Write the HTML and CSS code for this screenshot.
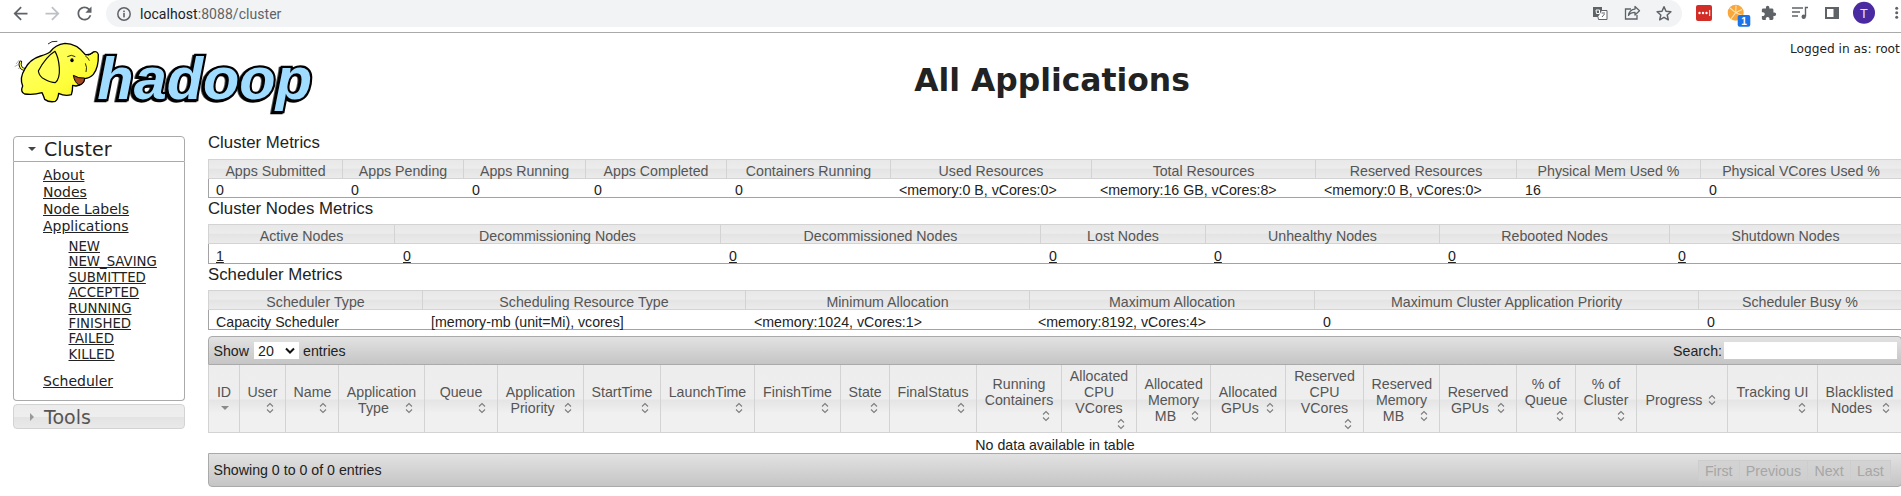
FILE: index.html
```html
<!DOCTYPE html>
<html lang="en">
<head>
<meta charset="utf-8">
<title>All Applications</title>
<link rel="stylesheet" href="styles.css">
</head>
<body>
<svg class="defs" width="0" height="0" aria-hidden="true">
  <symbol id="sort" viewBox="0 0 16 16"><path d="M5 6.5 8 3.5 11 6.5M5 9.5 8 12.5 11 9.5" fill="none" stroke="#7d7d7d" stroke-width="1.1"/></symbol>
  <symbol id="sort-desc" viewBox="0 0 16 16"><path d="M4 6h8L8 10z" fill="#8a8a8a"/></symbol>
</svg>

<div class="browser-bar">
  <svg class="tb-icon" viewBox="0 0 24 24"><path d="M20 11H7.83l5.59-5.59L12 4l-8 8 8 8 1.41-1.41L7.83 13H20v-2z"/></svg>
  <svg class="tb-icon tb-icon-off" viewBox="0 0 24 24"><path d="M4 11h12.17l-5.59-5.59L12 4l8 8-8 8-1.41-1.41L16.17 13H4v-2z"/></svg>
  <svg class="tb-icon" viewBox="0 0 24 24"><path d="M17.65 6.35A7.958 7.958 0 0012 4c-4.42 0-7.99 3.58-7.99 8s3.57 8 7.99 8c3.73 0 6.84-2.55 7.73-6h-2.08A5.99 5.99 0 0112 18c-3.31 0-6-2.69-6-6s2.69-6 6-6c1.66 0 3.14.69 4.22 1.78L13 11h7V4l-2.35 2.35z"/></svg>
  <div class="omnibox">
    <svg class="info-icon" viewBox="0 0 16 16"><circle cx="8" cy="8" r="6.2" fill="none" stroke="#5f6368" stroke-width="1.5"/><rect x="7.2" y="7" width="1.6" height="4.4" fill="#5f6368"/><rect x="7.2" y="4.6" width="1.6" height="1.6" fill="#5f6368"/></svg>
    <span class="url"><span class="url-host">localhost</span>:8088/cluster</span>
    <svg class="omni-actions" viewBox="1590 0 88 27">
      <rect x="1593" y="7" width="9" height="10" fill="#5f6368"/>
      <path d="M1602 10.500h5v9h-8.500l-.5-2.500" fill="#fff" stroke="#5f6368"/>
      <path d="M1596 10h3.500v3.500h-3z" fill="none" stroke="#fff"/>
      <path d="M1601.500 13h3.500M1602 17l2.500-3" fill="none" stroke="#5f6368"/>
      <path d="M1631 9h-5.500v10h11.500v-4" fill="none" stroke="#5f6368" stroke-width="1.300"/>
      <path d="M1635 6.500l4.500 4.300-4.500 4.200v-2.600c-3 0-5 .8-6.500 3 .5-3.500 2.500-6 6.500-6.300z" fill="none" stroke="#5f6368" stroke-width="1.300" stroke-linejoin="round"/>
      <path d="M1664 6.800l2 4.500 4.900.5-3.700 3.200 1.100 4.800-4.300-2.500-4.300 2.500 1.100-4.800-3.700-3.200 4.900-.5z" fill="none" stroke="#5f6368" stroke-width="1.500" stroke-linejoin="round"/>
    </svg>
  </div>
  <svg class="ext-strip" viewBox="1682 0 219 32">
    <rect x="1696" y="5" width="16" height="16" rx="2" fill="#d32d27"/>
    <circle cx="1699.500" cy="13" r="1.200" fill="#fff"/><circle cx="1703" cy="13" r="1.200" fill="#fff"/><circle cx="1706.500" cy="13" r="1.200" fill="#fff"/><rect x="1709.200" y="10" width="1" height="6" fill="#fff"/>
    <circle cx="1735.700" cy="12.700" r="8" fill="#f9a63a"/>
    <path d="M1735.700 12.700 1730 8M1735.700 12.700 1736 5.500M1735.700 12.700 1742 9.500M1735.700 12.700 1742.500 15.500M1735.700 12.700 1731 19" stroke="#fde3b0" stroke-width="1.100"/>
    <rect x="1737.700" y="15" width="12.600" height="11.700" rx="2" fill="#1a73e8"/>
    <text class="badge-text" x="1744" y="24.800">1</text>
    <g transform="translate(1760.500 5) scale(.68)"><path fill="#5f6368" d="M20.500 11H19V7c0-1.100-.9-2-2-2h-4V3.500C13 2.120 11.880 1 10.500 1S8 2.120 8 3.500V5H4c-1.100 0-1.990.9-1.990 2v3.800H3.500c1.490 0 2.700 1.210 2.700 2.700s-1.210 2.700-2.700 2.700H2V20c0 1.100.9 2 2 2h3.800v-1.500c0-1.490 1.210-2.700 2.700-2.700 1.490 0 2.700 1.210 2.700 2.700V22H17c1.100 0 2-.9 2-2v-4h1.500c1.380 0 2.500-1.120 2.500-2.500S21.880 11 20.500 11z"/></g>
    <path d="M1792 8h11M1792 12h8M1792 16h6" stroke="#5f6368" stroke-width="1.400"/>
    <path d="M1805.500 16.500V7.500h2.500" fill="none" stroke="#5f6368" stroke-width="1.400"/><circle cx="1803.700" cy="16.700" r="2.200" fill="#5f6368"/>
    <rect x="1825" y="7" width="14" height="12" fill="#5f6368"/><rect x="1827" y="9" width="6.500" height="8" fill="#fff"/>
    <circle cx="1864" cy="12.700" r="11" fill="#4a2aa0"/>
    <text class="avatar-text" x="1864" y="17.500">T</text>
    <circle cx="1896.700" cy="8.300" r="1.500" fill="#5f6368"/><circle cx="1896.700" cy="12.700" r="1.500" fill="#5f6368"/><circle cx="1896.700" cy="17.300" r="1.500" fill="#5f6368"/>
  </svg>
</div>

<header class="page-head">
  <svg class="logo" viewBox="0 0 915 240" role="img" aria-label="Hadoop">
    <defs>
      <linearGradient id="ele" x1="0" y1="0" x2="1" y2="1"><stop offset="0" stop-color="#ffff78"/><stop offset=".6" stop-color="#ffff3c"/><stop offset="1" stop-color="#f4ea20"/></linearGradient>
    </defs>
    <text class="logo-word" x="262" y="189" textLength="644" lengthAdjust="spacingAndGlyphs">hadoop</text>
    <path d="M44 100Q36 100 32 92Q28 84 32 78" fill="none" stroke="#000" stroke-width="9" stroke-linecap="round"/>
    <path d="M44 100Q36 100 32 92Q28 84 32 78" fill="none" stroke="#ffff50" stroke-width="4" stroke-linecap="round"/>
    <path d="M44 100Q58 70 92 60Q112 54 120 48Q135 26 165 22Q200 22 226 56Q240 58 250 48Q262 44 265 56Q266 95 250 115Q240 126 224 128Q222 146 198 150L188 148Q188 165 184 176Q165 182 146 172Q144 190 136 196Q118 200 104 190Q100 178 96 170Q70 178 44 174Q30 168 38 150Q28 125 44 100Z" fill="url(#ele)" stroke="#000" stroke-width="4" stroke-linejoin="round"/>
    <path d="M135 46Q108 62 85 105Q88 122 104 130Q122 140 136 140Q150 128 148 96Q146 64 135 46Z" fill="#ffff55" stroke="#000" stroke-width="3.500" stroke-linejoin="round"/>
    <path d="M190 118Q194 140 206 146Q222 146 224 126Q206 128 190 118Z" fill="#a8481e" stroke="#000" stroke-width="3"/>
    <ellipse cx="186" cy="73" rx="5" ry="6" fill="#000"/>
    <path d="M172 62Q184 54 196 62M226 60Q236 66 238 74M234 58L250 50M226 82Q232 94 228 108M142 16Q124 14 114 24" fill="none" stroke="#000" stroke-width="2.500"/>
    <path d="M18 84L28 72M14 92L24 86M24 98L32 94" fill="none" stroke="#888" stroke-width="2"/>
  </svg>
  <h1 class="page-title">All Applications</h1>
  <div class="user-info">Logged in as: root</div>
</header>

<div class="layout">
  <nav class="sidenav">
    <h3 class="nav-head nav-head-open"><svg class="nav-arrow" viewBox="0 0 8 8"><path d="M0 2h8L4 6z"/></svg>Cluster</h3>
    <div class="nav-body">
      <ul class="nav-list">
        <li><a href="#">About</a></li>
        <li><a href="#">Nodes</a></li>
        <li><a href="#">Node Labels</a></li>
        <li><a href="#">Applications</a>
          <ul class="nav-sub">
            <li><a href="#">NEW</a></li>
            <li><a href="#">NEW_SAVING</a></li>
            <li><a href="#">SUBMITTED</a></li>
            <li><a href="#">ACCEPTED</a></li>
            <li><a href="#">RUNNING</a></li>
            <li><a href="#">FINISHED</a></li>
            <li><a href="#">FAILED</a></li>
            <li><a href="#">KILLED</a></li>
          </ul>
        </li>
        <li class="nav-gap"><a href="#">Scheduler</a></li>
      </ul>
    </div>
    <h3 class="nav-head nav-head-closed"><svg class="nav-arrow" viewBox="0 0 8 8"><path d="M2 0v8l4-4z"/></svg>Tools</h3>
  </nav>

  <main class="content">
    <h3 class="section-title">Cluster Metrics</h3>
    <table class="metrics metrics-cluster">
      <thead><tr><th>Apps Submitted</th><th>Apps Pending</th><th>Apps Running</th><th>Apps Completed</th><th>Containers Running</th><th>Used Resources</th><th>Total Resources</th><th>Reserved Resources</th><th>Physical Mem Used %</th><th>Physical VCores Used %</th></tr></thead>
      <tbody><tr><td>0</td><td>0</td><td>0</td><td>0</td><td>0</td><td>&lt;memory:0 B, vCores:0&gt;</td><td>&lt;memory:16 GB, vCores:8&gt;</td><td>&lt;memory:0 B, vCores:0&gt;</td><td>16</td><td>0</td></tr></tbody>
    </table>

    <h3 class="section-title">Cluster Nodes Metrics</h3>
    <table class="metrics metrics-nodes">
      <thead><tr><th>Active Nodes</th><th>Decommissioning Nodes</th><th>Decommissioned Nodes</th><th>Lost Nodes</th><th>Unhealthy Nodes</th><th>Rebooted Nodes</th><th>Shutdown Nodes</th></tr></thead>
      <tbody><tr><td><a href="#">1</a></td><td><a href="#">0</a></td><td><a href="#">0</a></td><td><a href="#">0</a></td><td><a href="#">0</a></td><td><a href="#">0</a></td><td><a href="#">0</a></td></tr></tbody>
    </table>

    <h3 class="section-title">Scheduler Metrics</h3>
    <table class="metrics metrics-sched">
      <thead><tr><th>Scheduler Type</th><th>Scheduling Resource Type</th><th>Minimum Allocation</th><th>Maximum Allocation</th><th>Maximum Cluster Application Priority</th><th>Scheduler Busy %</th></tr></thead>
      <tbody><tr><td>Capacity Scheduler</td><td>[memory-mb (unit=Mi), vcores]</td><td>&lt;memory:1024, vCores:1&gt;</td><td>&lt;memory:8192, vCores:4&gt;</td><td>0</td><td>0</td></tr></tbody>
    </table>

    <div class="dt-toolbar dt-toolbar-top">
      <label class="dt-length">Show <select class="dt-select"><option>20</option></select> entries</label>
      <label class="dt-search">Search:<input class="dt-input" type="text"></label>
    </div>
    <table class="apps">
      <thead><tr>
        <th class="apps-id"><div>ID<svg class="sort"><use href="#sort-desc"/></svg></div></th>
        <th><div>User<svg class="sort"><use href="#sort"/></svg></div></th>
        <th><div>Name<svg class="sort"><use href="#sort"/></svg></div></th>
        <th><div>Application Type<svg class="sort"><use href="#sort"/></svg></div></th>
        <th><div>Queue<svg class="sort"><use href="#sort"/></svg></div></th>
        <th><div>Application Priority<svg class="sort"><use href="#sort"/></svg></div></th>
        <th><div>StartTime<svg class="sort"><use href="#sort"/></svg></div></th>
        <th><div>LaunchTime<svg class="sort"><use href="#sort"/></svg></div></th>
        <th><div>FinishTime<svg class="sort"><use href="#sort"/></svg></div></th>
        <th><div>State<svg class="sort"><use href="#sort"/></svg></div></th>
        <th><div>FinalStatus<svg class="sort"><use href="#sort"/></svg></div></th>
        <th><div>Running Containers<svg class="sort"><use href="#sort"/></svg></div></th>
        <th><div>Allocated CPU VCores<svg class="sort"><use href="#sort"/></svg></div></th>
        <th><div>Allocated Memory MB<svg class="sort"><use href="#sort"/></svg></div></th>
        <th><div>Allocated GPUs<svg class="sort"><use href="#sort"/></svg></div></th>
        <th><div>Reserved CPU VCores<svg class="sort"><use href="#sort"/></svg></div></th>
        <th><div>Reserved Memory MB<svg class="sort"><use href="#sort"/></svg></div></th>
        <th><div>Reserved GPUs<svg class="sort"><use href="#sort"/></svg></div></th>
        <th><div>% of Queue<svg class="sort"><use href="#sort"/></svg></div></th>
        <th><div>% of Cluster<svg class="sort"><use href="#sort"/></svg></div></th>
        <th><div>Progress<svg class="sort"><use href="#sort"/></svg></div></th>
        <th><div>Tracking UI<svg class="sort"><use href="#sort"/></svg></div></th>
        <th><div>Blacklisted Nodes<svg class="sort"><use href="#sort"/></svg></div></th>
      </tr></thead>
      <tbody><tr><td class="apps-empty" colspan="23">No data available in table</td></tr></tbody>
    </table>
    <div class="dt-toolbar dt-toolbar-bottom">
      <span class="dt-info">Showing 0 to 0 of 0 entries</span>
      <div class="dt-pager"><span class="dt-page">First</span><span class="dt-page">Previous</span><span class="dt-page">Next</span><span class="dt-page">Last</span></div>
    </div>
  </main>
</div>
</body>
</html>
```
FILE: styles.css
```css
html, body {
  margin: 0;
  width: 1901px;
  height: 496px;
  overflow: hidden;
  background: #fff;
}
body {
  font-family: "Liberation Sans", Arial, sans-serif;
  font-size: 14.2px;
  color: #222;
  position: relative;
}
a { color: #222; }
.defs { position: absolute; }

/* browser chrome */
.browser-bar {
  display: flex;
  align-items: flex-start;
  height: 32px;
  padding-left: 9.5px;
  border-bottom: 1px solid #aaa;
  background: #fff;
}
.tb-icon {
  width: 21px;
  height: 21px;
  margin: 3px 11px 0 0;
  fill: #5f6368;
  flex: none;
}
.tb-icon-off { fill: #bdc1c6; }
.omnibox {
  display: flex;
  align-items: center;
  width: 1576px;
  height: 27px;
  margin-left: .5px;
  background: #f1f3f4;
  border-radius: 14px;
  flex: none;
}
.info-icon { width: 16px; height: 16px; margin-left: 10px; flex: none; }
.url { margin-left: 8px; font-family: Roboto, "Noto Sans", sans-serif; font-size: 14px; letter-spacing: .05px; color: #5f6368; }
.url-host { color: #202124; }
.omni-actions { width: 88px; height: 27px; margin-left: auto; margin-right: 4px; flex: none; }
.ext-strip { width: 219px; height: 32px; flex: none; }
.badge-text { font: bold 10px "Liberation Sans", sans-serif; fill: #fff; text-anchor: middle; }
.avatar-text { font: 13px Roboto, sans-serif; fill: #e8e4f6; text-anchor: middle; }

/* page header */
.page-head {
  position: relative;
  display: flex;
  height: 100px;
}
.logo { width: 305px; height: 80px; margin: 3px 0 0 10px; flex: none; }
.logo-word {
  font: italic bold 178px "Liberation Sans", sans-serif;
  fill: #9fdcff;
  stroke: #000;
  stroke-width: 13px;
  stroke-linejoin: miter;
  paint-order: stroke;
  filter: drop-shadow(-5px 3px 0 #000);
}
.page-title {
  flex: 1;
  margin: 0;
  padding: 29px 112px 0 0;
  font: bold 31.4px/36px "DejaVu Sans", sans-serif;
  text-align: center;
  color: #222;
}
.user-info {
  position: absolute;
  top: 8px;
  left: 1790px;
  font: 12.2px/16px "DejaVu Sans", sans-serif;
  white-space: nowrap;
  color: #222;
}

/* layout */
.layout { display: flex; align-items: flex-start; }
.sidenav {
  width: 172px;
  margin: 3px 0 0 13px;
  font-family: "DejaVu Sans", sans-serif;
  flex: none;
}
.nav-head {
  display: flex;
  align-items: center;
  margin: 0;
  padding-left: 14px;
  font-size: 19px;
  font-weight: normal;
  box-sizing: border-box;
  border: 1px solid #aaa;
}
.nav-arrow { width: 8px; height: 8px; margin-right: 8px; }
.nav-head-open {
  height: 26px;
  color: #222;
  background: #fff;
  border-radius: 4px 4px 0 0;
}
.nav-head-open .nav-arrow { fill: #444; }
.nav-head-closed {
  height: 25px;
  margin-top: 3px;
  color: #555;
  border-color: #d3d3d3;
  background: linear-gradient(#ececec 0, #eeeeee 50%, #e3e3e3 52%, #e9e9e9 100%);
  border-radius: 4px;
}
.nav-head-closed .nav-arrow { fill: #999; }
.nav-body {
  height: 239px;
  box-sizing: border-box;
  padding: 5px 0 0 29px;
  border: 1px solid #aaa;
  border-top: 0;
  border-radius: 0 0 4px 4px;
}
.nav-list, .nav-sub { list-style: none; margin: 0; padding: 0; }
.nav-list { font-size: 14px; line-height: 17px; }
.nav-sub { margin: 4px 0 0 25.5px; font-size: 13.3px; line-height: 15.4px; }
.nav-gap { margin-top: 11px; }

/* content */
.content { width: 1694px; margin-left: 23px; flex: none; }
.section-title {
  margin: 0 0 6px;
  font-size: 16.8px;
  font-weight: normal;
  line-height: 20px;
  color: #222;
}
.metrics + .section-title { padding-top: 1px; margin-bottom: 5px; }
table { border-collapse: separate; border-spacing: 0; table-layout: fixed; width: 1694px; }
.metrics th {
  height: 20px;
  padding: 4px 0 0;
  box-sizing: border-box;
  font-weight: normal;
  color: #555;
  text-align: center;
  vertical-align: top;
  line-height: 14px;
  border: 1px solid #d3d3d3;
  border-left: 0;
  background: linear-gradient(#e8e8e8 0, #ececec 45%, #e4e4e4 52%, #ebebeb 100%);
}
.metrics th:first-child { border-left: 1px solid #d3d3d3; }
.metrics td {
  height: 20px;
  box-sizing: border-box;
  padding: 5px 0 0 8px;
  line-height: 14px;
  vertical-align: top;
  color: #222;
  border-bottom: 1px solid #a3a3a3;
}
.metrics td:first-child { border-left: 1px solid #a3a3a3; padding-left: 7px; }
.metrics-cluster td { height: 19px; padding-top: 4px; }

.metrics-cluster th:nth-child(1) { width: 135px; }
.metrics-cluster th:nth-child(2) { width: 121px; }
.metrics-cluster th:nth-child(3) { width: 122px; }
.metrics-cluster th:nth-child(4) { width: 141px; }
.metrics-cluster th:nth-child(5) { width: 164px; }
.metrics-cluster th:nth-child(6) { width: 201px; }
.metrics-cluster th:nth-child(7) { width: 224px; }
.metrics-cluster th:nth-child(8) { width: 201px; }
.metrics-cluster th:nth-child(9) { width: 184px; }
.metrics-cluster th:nth-child(10) { width: 201px; }

.metrics-nodes th:nth-child(1) { width: 187px; }
.metrics-nodes th:nth-child(2) { width: 326px; }
.metrics-nodes th:nth-child(3) { width: 320px; }
.metrics-nodes th:nth-child(4) { width: 165px; }
.metrics-nodes th:nth-child(5) { width: 234px; }
.metrics-nodes th:nth-child(6) { width: 230px; }
.metrics-nodes th:nth-child(7) { width: 232px; }

.metrics-sched th:nth-child(1) { width: 215px; }
.metrics-sched th:nth-child(2) { width: 323px; }
.metrics-sched th:nth-child(3) { width: 284px; }
.metrics-sched th:nth-child(4) { width: 285px; }
.metrics-sched th:nth-child(5) { width: 384px; }
.metrics-sched th:nth-child(6) { width: 203px; }

/* datatable */
.dt-toolbar {
  display: flex;
  align-items: center;
  justify-content: space-between;
  box-sizing: border-box;
  padding: 0 4px 0 4.500px;
  border: 1px solid #aaa;
  background: linear-gradient(#e2e2e2, #c5c5c5);
  color: #222;
}
.dt-toolbar-top {
  height: 29px;
  margin-top: 6px;
  border-radius: 4px 4px 0 0;
}
.dt-toolbar-bottom {
  height: 34px;
  border-radius: 0 0 4px 4px;
}
.dt-length, .dt-search { display: flex; align-items: center; }
.dt-select {
  appearance: none;
  -webkit-appearance: none;
  width: 45px;
  height: 17px;
  margin: 0 4px 0 5px;
  padding: 0 0 0 4px;
  border: 0;
  border-radius: 0;
  background: #fff url("data:image/svg+xml,%3Csvg xmlns='http://www.w3.org/2000/svg' width='10' height='7'%3E%3Cpath d='M1 1.500 5 5.500 9 1.500' fill='none' stroke='%23111' stroke-width='2'/%3E%3C/svg%3E") no-repeat right 4px center;
  font: 14.2px "Liberation Sans", sans-serif;
  color: #222;
}
.dt-input {
  width: 173px;
  height: 17px;
  margin-left: 2px;
  padding: 0;
  border: 0;
  background: #fff;
}
.dt-pager { display: flex; margin-right: 6px; }
.dt-page {
  padding: 0 6.200px;
  height: 21px;
  line-height: 21px;
  color: #a6a6a6;
  background: linear-gradient(#d3d3d3, #cfcfcf);
  border: 1px solid #cdcdcd;
  box-sizing: border-box;
}
.dt-page + .dt-page { border-left: 0; }

.apps th {
  height: 68px;
  box-sizing: border-box;
  padding: 2px 7.500px 0;
  font-weight: normal;
  line-height: 16px;
  color: #555;
  text-align: center;
  vertical-align: middle;
  border: 1px solid #d3d3d3;
  border-top: 0;
  border-left: 0;
  background: linear-gradient(#ededed 0, #eeeeee 50%, #e5e5e5 53%, #f0f0f0 72%, #f0f0f0 100%);
}
.apps th:first-child { border-left: 1px solid #d3d3d3; }
.apps th.apps-id { padding: 2px 6.500px 0; }
.sort { float: right; width: 16px; height: 16px; }
.apps-empty {
  height: 20px;
  padding: 4px 0 0;
  box-sizing: border-box;
  line-height: 16px;
  text-align: center;
  color: #222;
}
.apps th:nth-child(1) { width: 32px; }
.apps th:nth-child(2) { width: 46px; }
.apps th:nth-child(3) { width: 53px; }
.apps th:nth-child(4) { width: 86px; }
.apps th:nth-child(5) { width: 73px; }
.apps th:nth-child(6) { width: 86px; }
.apps th:nth-child(7) { width: 77px; }
.apps th:nth-child(8) { width: 94px; }
.apps th:nth-child(9) { width: 86px; }
.apps th:nth-child(10) { width: 49px; }
.apps th:nth-child(11) { width: 87px; }
.apps th:nth-child(12) { width: 85px; }
.apps th:nth-child(13) { width: 75px; }
.apps th:nth-child(14) { width: 74px; }
.apps th:nth-child(15) { width: 75px; }
.apps th:nth-child(16) { width: 78px; }
.apps th:nth-child(17) { width: 76px; }
.apps th:nth-child(18) { width: 77px; }
.apps th:nth-child(19) { width: 59px; }
.apps th:nth-child(20) { width: 61px; }
.apps th:nth-child(21) { width: 91px; }
.apps th:nth-child(22) { width: 90px; }
.apps th:nth-child(23) { width: 84px; }
```
